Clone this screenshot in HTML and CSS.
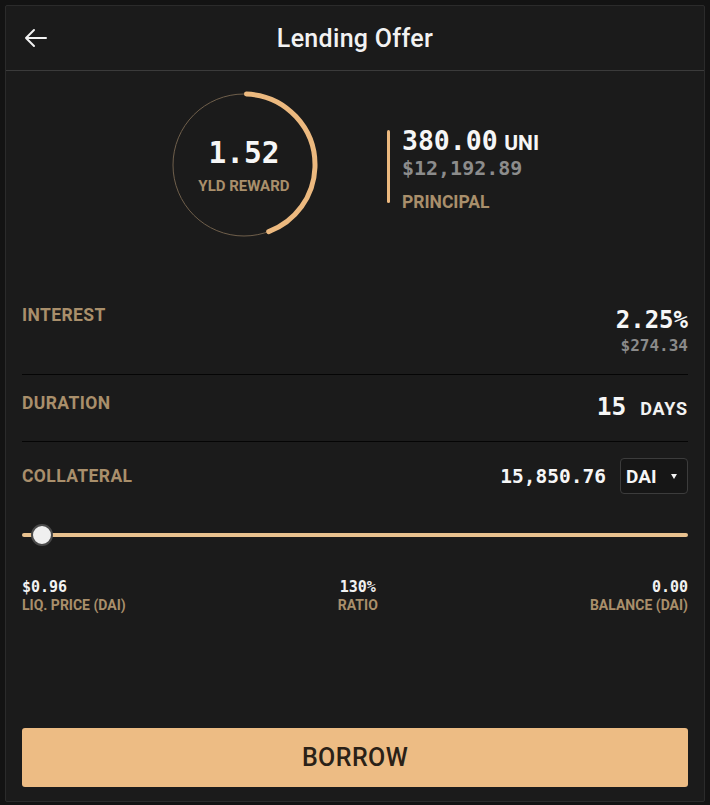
FILE: index.html
```html
<!DOCTYPE html>
<html>
<head>
<meta charset="utf-8">
<link rel="stylesheet" href="styles.css">
</head>
<body>
<div class="panel">
  <header class="header">
    <svg class="back" width="26" height="26" viewBox="0 0 26 26" fill="none" stroke="#f2f2f2" stroke-width="2" stroke-linecap="round" stroke-linejoin="round"><path d="M23 13H3M11 5l-8 8 8 8"/></svg>
    <h1 class="title">Lending Offer</h1>
  </header>

  <section class="hero">
    <div class="ring">
      <svg width="150" height="150" viewBox="0 0 150 150">
        <circle cx="75" cy="75" r="71" fill="none" stroke="#6f5f4b" stroke-width="1"/>
        <circle class="arc" cx="75" cy="75" r="71" fill="none" stroke="#ecb97f" stroke-width="5" stroke-linecap="round" stroke-dasharray="195 500" transform="rotate(-88 75 75)"/>
      </svg>
      <div class="ring-text">
        <div class="ring-value">1.52</div>
        <div class="ring-label">YLD REWARD</div>
      </div>
    </div>
    <div class="principal">
      <div class="vbar"></div>
      <div class="principal-text">
        <div class="p-amount"><span class="mono">380.00</span> <span class="unit">UNI</span></div>
        <div class="p-usd">$12,192.89</div>
        <div class="p-label">PRINCIPAL</div>
      </div>
    </div>
  </section>

  <section class="rows">
    <div class="row row-interest">
      <div class="label">INTEREST</div>
      <div class="right">
        <div class="big-val">2.25%</div>
        <div class="sub-val">$274.34</div>
      </div>
    </div>
    <div class="row row-duration">
      <div class="label">DURATION</div>
      <div class="dur"><span class="dur-num">15</span><span class="dur-unit">DAYS</span></div>
    </div>
    <div class="row row-collateral">
      <div class="label">COLLATERAL</div>
      <div class="coll">
        <span class="coll-val">15,850.76</span>
        <div class="select"><span class="select-text">DAI</span><span class="caret"></span></div>
      </div>
    </div>
  </section>

  <section class="slider">
    <div class="track"><div class="thumb"></div></div>
  </section>

  <section class="stats">
    <div class="stat stat-left"><div class="stat-val">$0.96</div><div class="stat-label">LIQ. PRICE (DAI)</div></div>
    <div class="stat stat-mid"><div class="stat-val">130%</div><div class="stat-label">RATIO</div></div>
    <div class="stat stat-right"><div class="stat-val">0.00</div><div class="stat-label">BALANCE (DAI)</div></div>
  </section>

  <div class="spacer"></div>
  <button class="borrow">BORROW</button>
</div>
</body>
</html>
```

FILE: styles.css
```css
* { box-sizing: border-box; }
html, body { margin: 0; padding: 0; }
body {
  background: #131313;
  padding: 5px;
  width: 710px;
  height: 805px;
  font-family: Roboto, "Noto Sans", sans-serif;
  color: #f2f2f2;
}
.panel {
  width: 700px;
  height: 797px;
  background: #1b1b1b;
  border: 1px solid #2b2b2b;
  border-radius: 2px;
  display: flex;
  flex-direction: column;
}
.header {
  height: 65px;
  border-bottom: 1px solid #3b3b3b;
  display: flex;
  align-items: center;
  justify-content: center;
  position: relative;
}
.back { position: absolute; left: 17px; top: 19px; }
.title {
  margin: 0;
  font-size: 25px;
  font-weight: 500;
  letter-spacing: 0.3px;
  color: #f2f2f2;
}
.hero {
  display: flex;
  justify-content: center;
  align-items: flex-start;
  padding: 19px 2px 50px 0;
  gap: 68px;
}
.ring { position: relative; width: 150px; height: 150px; }
.ring svg { display: block; }
.ring-text {
  position: absolute;
  inset: 0;
  display: flex;
  flex-direction: column;
  align-items: center;
  justify-content: center;
}
.mono, .ring-value, .p-usd, .big-val, .sub-val, .dur-num, .coll-val, .stat-val {
  font-family: "DejaVu Sans Mono", "Liberation Mono", monospace;
  font-weight: bold;
}
.ring-value { font-size: 29.5px; line-height: 32px; margin-top: 2px; color: #f6f6f6; }
.ring-label { font-size: 15px; font-weight: 700; color: #a98f6b; margin-top: 8px; }
.principal { display: flex; align-items: flex-start; gap: 12px; margin-top: 37px; }
.vbar { width: 3px; height: 73px; background: #ecb97f; border-radius: 2px; margin-top: 3px; }
.principal-text { display: flex; flex-direction: column; }
.p-amount { font-size: 26.5px; line-height: 28px; color: #f6f6f6; }
.unit { font-family: Roboto, sans-serif; font-weight: 700; font-size: 21px; }
.p-usd { font-size: 20px; line-height: 24px; margin-top: -1px; color: #8c8c8c; }
.p-label { font-size: 17.5px; font-weight: 700; color: #a98f6b; margin-top: 11px; line-height: 22px; }

.rows { padding: 0 16px; }
.row {
  display: flex;
  justify-content: space-between;
  border-bottom: 1px solid #050505;
}
.label {
  font-size: 17.5px;
  font-weight: 700;
  line-height: 22px;
  color: #a98f6b;
  letter-spacing: 0.4px;
}
.row-interest { align-items: flex-start; padding: 14px 0 18px; }
.right { display: flex; flex-direction: column; align-items: flex-end; }
.big-val { font-size: 24px; line-height: 28px; margin-top: 2px; color: #f6f6f6; }
.sub-val { font-size: 16px; line-height: 20px; margin-top: 2px; color: #8a8a8a; }
.row-duration { align-items: flex-start; padding: 17px 0 18px; }
.dur { margin-top: 1px; line-height: 28px; display: flex; align-items: baseline; gap: 14px; }
.dur-num { font-size: 24.5px; color: #f6f6f6; }
.dur-unit { font-size: 18px; font-weight: 700; color: #f2f2f2; letter-spacing: 0.8px; }
.row-collateral { align-items: center; padding: 16px 0 0; border-bottom: none; }
.coll { display: flex; align-items: center; gap: 14px; }
.coll-val { font-size: 19.5px; color: #f6f6f6; }
.select {
  width: 68px;
  height: 36px;
  border: 1px solid #3c3c3c;
  border-radius: 4px;
  background: #161616;
  display: flex;
  align-items: center;
  justify-content: space-between;
  padding: 0 10px 0 5px;
}
.select-text { font-size: 19px; font-weight: 700; color: #f6f6f6; }
.caret {
  width: 0; height: 0;
  border-left: 3.5px solid transparent;
  border-right: 3.5px solid transparent;
  border-top: 5px solid #f2f2f2;
}
.slider { padding: 39px 16px 0; }
.track {
  position: relative;
  height: 4px;
  background: #e9c28f;
  border-radius: 2px;
}
.thumb {
  position: absolute;
  left: 9px;
  top: -9px;
  width: 22px;
  height: 22px;
  border-radius: 50%;
  background: #efefef;
  border: 2px solid #4a4a4a;
}
.stats {
  display: flex;
  justify-content: space-between;
  padding: 41px 16px 0;
}
.stat { display: flex; flex-direction: column; }
.stat-left { align-items: flex-start; }
.stat-mid { align-items: center; }
.stat-right { align-items: flex-end; }
.stat-val { font-size: 15px; line-height: 18px; color: #f2f2f2; }
.stat-label { font-size: 14px; font-weight: 700; color: #a98f6b; line-height: 16px; margin-top: 1px; }
.spacer { flex: 1; }
.borrow {
  margin: 0 16px 14px;
  height: 59px;
  border: none;
  border-radius: 3px;
  background: #edbc84;
  color: #2a2117;
  font-family: Roboto, sans-serif;
  font-size: 25px;
  font-weight: 500;
  letter-spacing: 0.4px;
}
```
